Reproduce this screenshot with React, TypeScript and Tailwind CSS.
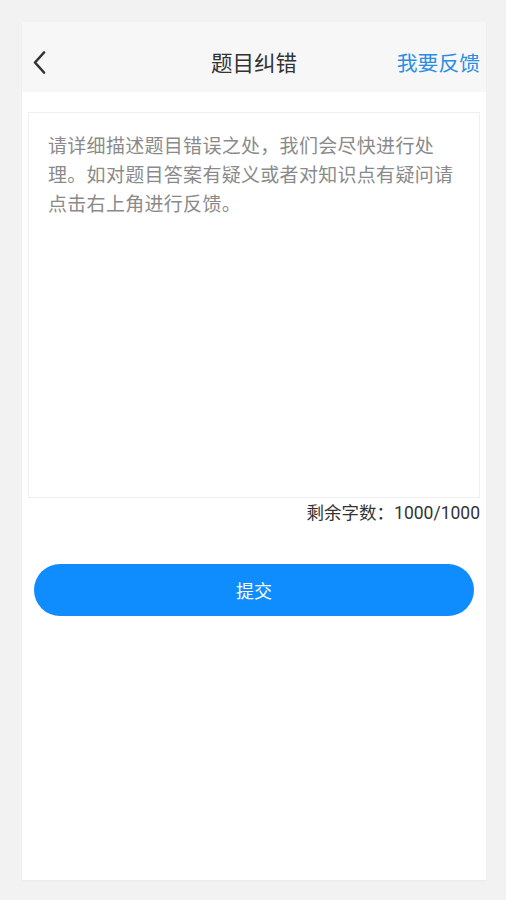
export default function App() {
  const font = { fontFamily: '"Noto Sans CJK SC", "Noto Sans", sans-serif' };

  return (
    <div className="min-h-[900px] w-full bg-[#f2f2f2] pt-[22px] pb-[20px]" style={font}>
      <div className="ml-[22px] flex h-[858px] w-[464px] flex-col bg-white shadow-[0_1px_2px_rgba(0,0,0,0.04)]">
        {/* Header */}
        <div className="relative flex h-[70px] items-start justify-center bg-[#f7f7f7] pt-[28px]">
          <button className="absolute left-[10px] top-[28px] flex h-[24px] w-[14px] items-center justify-center">
            <svg width="13" height="23" viewBox="0 0 13 23" fill="none">
              <path d="M11 1.5 L2 11.5 L11 21.5" stroke="#333" strokeWidth="2.6" strokeLinecap="round" strokeLinejoin="round" />
            </svg>
          </button>
          <h1 className="text-[21.5px] leading-[24px] text-[#333]">题目纠错</h1>
          <span className="absolute right-[6px] top-[29px] text-[20.8px] leading-[22px] text-[#2a8ee3]">我要反馈</span>
        </div>

        {/* Body */}
        <div className="px-[6px] pt-[20px]">
          <div className="h-[386px] border border-[#efefef] px-[19px] pt-[17px]">
            <p className="text-[19px] leading-[29px] tracking-[0.3px] text-[#8a8a8a]">
              请详细描述题目错误之处，我们会尽快进行处理。如对题目答案有疑义或者对知识点有疑问请点击右上角进行反馈。
            </p>
          </div>
          <p
            className="mt-[4px] text-right text-[17.5px] leading-[22px] text-[#333]"
            style={{ fontFamily: 'Roboto, "Noto Sans CJK SC", sans-serif' }}
          >
            剩余字数：1000/1000
          </p>

          <div className="px-[6px] pt-[40px]">
            <button className="flex h-[52px] w-full items-center justify-center rounded-full bg-[#0f8cfd] text-[18px] text-white">
              提交
            </button>
          </div>
        </div>
      </div>
    </div>
  );
}
